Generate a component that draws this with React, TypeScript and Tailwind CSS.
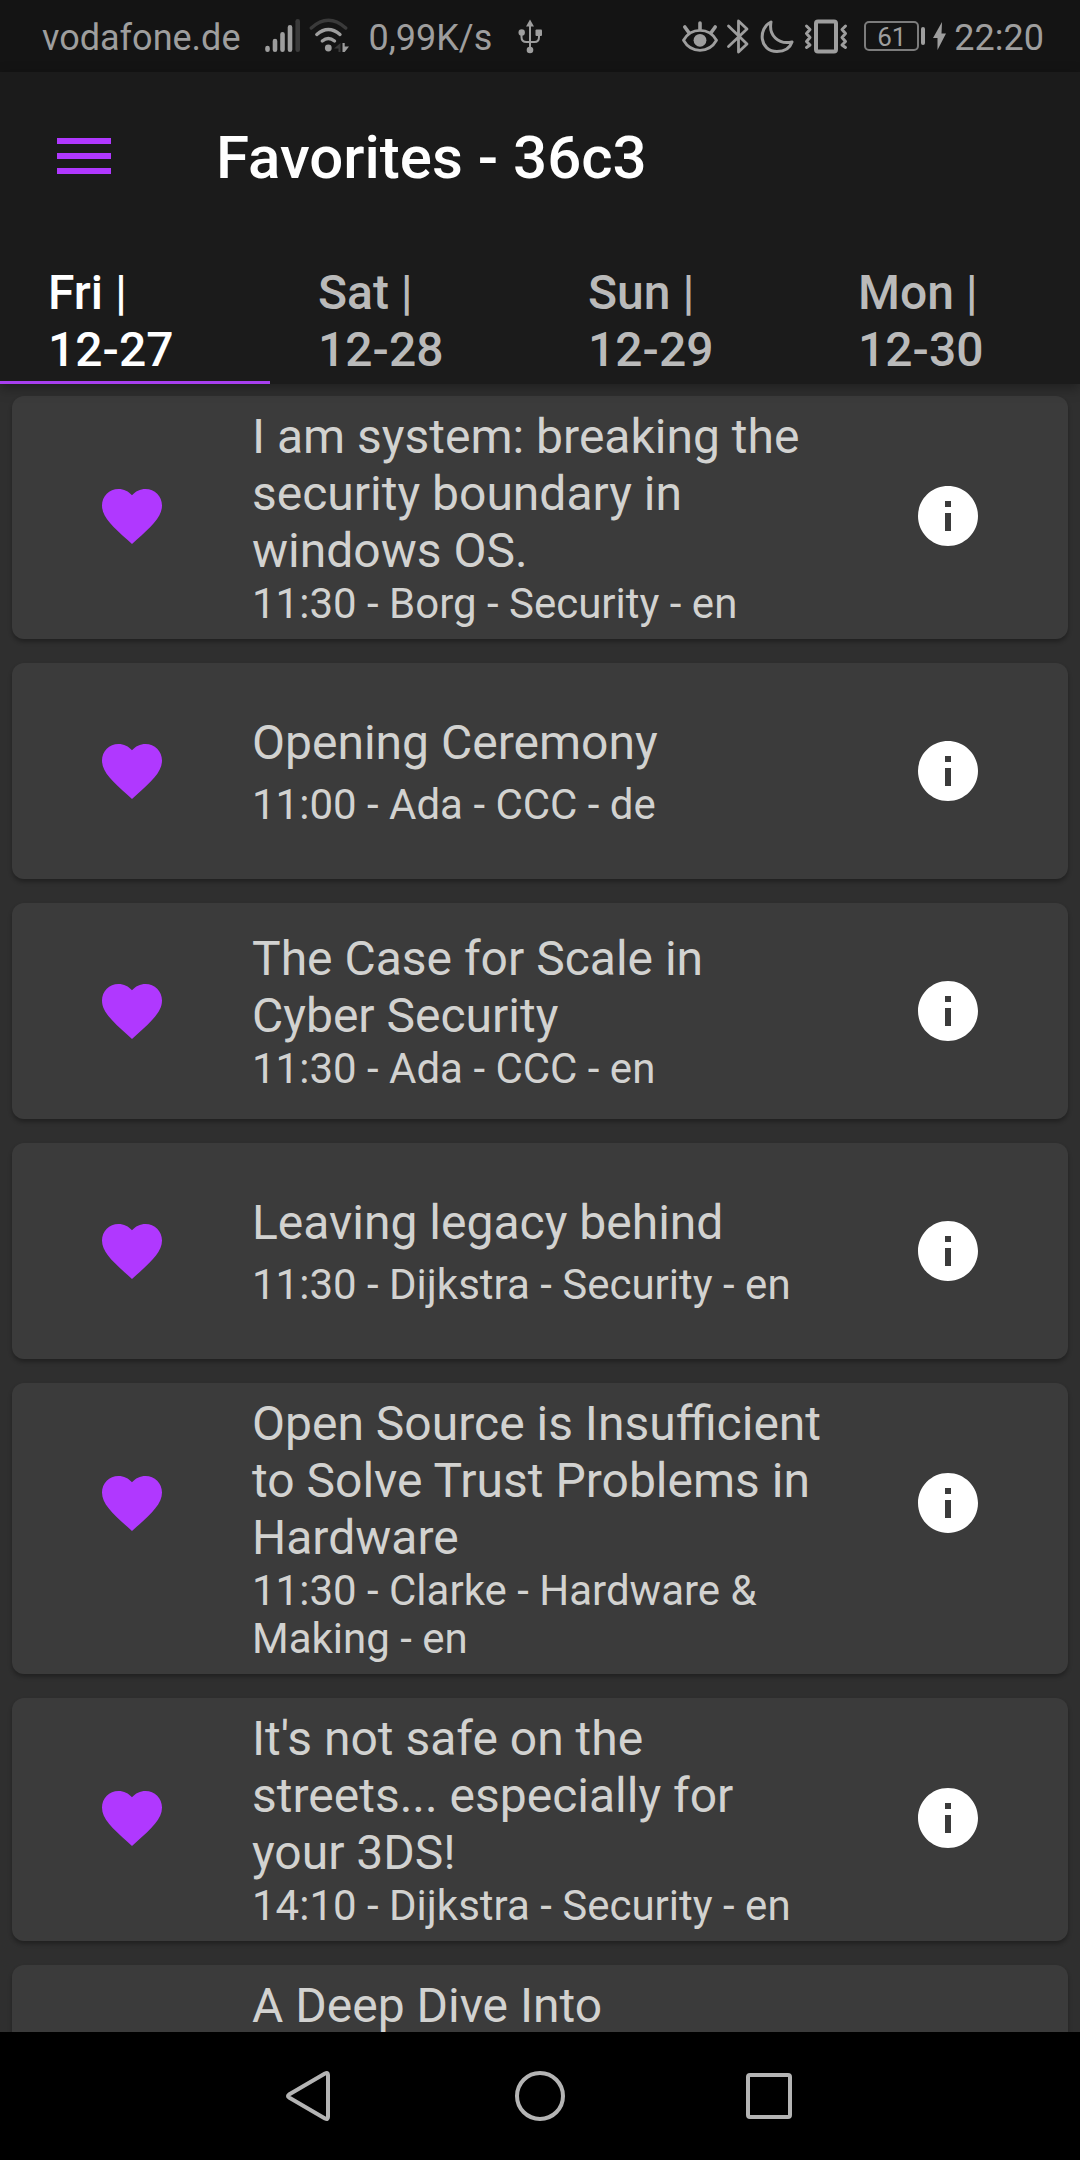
import { MdFavorite, MdInfo, MdMenu } from "react-icons/md";

type Talk = { title: string; details?: string; size: "compact" | "regular" | "tall" };

const days = [
  { day: "Fri |", date: "12-27" },
  { day: "Sat |", date: "12-28" },
  { day: "Sun |", date: "12-29" },
  { day: "Mon |", date: "12-30" },
];

const talks: Talk[] = [
  { title: "I am system: breaking the security boundary in windows OS.", details: "11:30 - Borg - Security - en", size: "tall" },
  { title: "Opening Ceremony", details: "11:00 - Ada - CCC - de", size: "compact" },
  { title: "The Case for Scale in Cyber Security", details: "11:30 - Ada - CCC - en", size: "regular" },
  { title: "Leaving legacy behind", details: "11:30 - Dijkstra - Security - en", size: "compact" },
  { title: "Open Source is Insufficient to Solve Trust Problems in Hardware", details: "11:30 - Clarke - Hardware & Making - en", size: "tall" },
  { title: "It's not safe on the streets... especially for your 3DS!", details: "14:10 - Dijkstra - Security - en", size: "tall" },
  { title: "A Deep Dive Into", size: "tall" },
];

function SignalIcon() {
  return (
    <svg className="h-9 w-9 shrink-0" viewBox="0 0 36 36" fill="none" strokeWidth="4.6" strokeLinecap="round" aria-hidden="true">
      <path d="M2.5 30v1.7M10 23v8.7M17.5 16.300v15.400M25 9.300v22.400" stroke="#9e9e9e" />
      <path d="M32.700 3.300v28.400" stroke="#3a3a3a" />
    </svg>
  );
}

function WifiIcon() {
  return (
    <svg className="h-9 w-10 shrink-0" viewBox="0 0 40 36" fill="none" strokeWidth="3.400" strokeLinecap="round" aria-hidden="true">
      <path d="M2.300 10Q19.300-5.500 36.700 10" stroke="#3a3a3a" />
      <path d="M7.800 16.500Q19.300 6.500 31 16.500M13.300 23Q19.300 18 25.500 23" stroke="#9e9e9e" />
      <circle cx="19.300" cy="30" r="3.400" fill="#9e9e9e" />
      <path d="M31.500 25v9h-2v-3.500H25z" fill="#3a3a3a" />
      <path d="M33.500 25h2.200v3.500h4.300l-4.300 5.500h-2.200z" fill="#9e9e9e" />
    </svg>
  );
}

function UsbIcon() {
  return (
    <svg className="h-9 w-6 shrink-0" viewBox="0 0 24 36" fill="none" stroke="#9e9e9e" strokeWidth="2" aria-hidden="true">
      <path d="M12 6v26M3.500 14v5q0 5 5 5h8q4.500 0 4.500-5v-5" />
      <path d="M12 1.500l4 7H8z" fill="#9e9e9e" stroke="none" />
      <circle cx="3.700" cy="14.500" r="3.200" fill="#9e9e9e" stroke="none" />
      <rect x="17.500" y="11.500" width="6.500" height="6.500" rx="1" fill="#9e9e9e" stroke="none" />
      <circle cx="12" cy="32" r="3.300" fill="#9e9e9e" stroke="none" />
    </svg>
  );
}

function EyeIcon() {
  return (
    <svg className="h-9 w-9 shrink-0" viewBox="0 0 36 36" fill="none" stroke="#9e9e9e" strokeWidth="2.800" strokeLinecap="round" aria-hidden="true">
      <path d="M1.500 22.300C9 9 27 9 34.500 22.300C27 35.600 9 35.600 1.500 22.300z" strokeLinejoin="round" />
      <path d="M18 5v6M2.800 9l4 5.500M33.200 9l-4 5.500" strokeWidth="3.600" />
      <circle cx="18" cy="22.300" r="6.400" fill="#9e9e9e" stroke="none" />
    </svg>
  );
}

function BluetoothIcon() {
  return (
    <svg className="h-9 w-6 shrink-0" viewBox="0 0 24 36" fill="none" stroke="#9e9e9e" strokeWidth="2.800" strokeLinecap="round" strokeLinejoin="round" aria-hidden="true">
      <path d="M2.500 8L21 26l-8.500 8V3L21 11 2.500 28.500" />
    </svg>
  );
}

function MoonIcon() {
  return (
    <svg className="h-9 w-9 shrink-0" viewBox="0 0 36 36" fill="none" stroke="#9e9e9e" strokeWidth="3" strokeLinejoin="round" aria-hidden="true">
      <path d="M11 4C-2.500 10.500-.5 33.500 17 33.500C24.500 33.500 30 30 32 24C18 27 8.500 17 11 4z" />
    </svg>
  );
}

function VibrateIcon() {
  return (
    <svg className="h-9 w-11 shrink-0" viewBox="0 0 44 36" fill="none" stroke="#9e9e9e" strokeWidth="3" strokeLinecap="round" strokeLinejoin="round" aria-hidden="true">
      <rect x="12" y="3.500" width="20" height="30" rx="2" strokeWidth="4" />
      <path d="M2.500 8l3.500 3.500-3.500 4 3.500 4-3.500 4 3.500 3.500-3.500 2.500M41.500 8l-3.500 3.500 3.500 4-3.500 4 3.500 4-3.500 3.500 3.500 2.500" />
    </svg>
  );
}

function StatusBar() {
  return (
    <div className="flex h-[72px] shrink-0 items-center justify-between bg-[#141414] pr-9 pl-[42px] text-[36px] leading-[48px] text-[#9e9e9e]">
      <div className="flex items-center">
        <span className="pt-1">vodafone.de</span>
        <span className="ml-6 flex items-center gap-2">
          <SignalIcon />
          <WifiIcon />
        </span>
        <span className="ml-5 pt-1">0,99K/s</span>
        <span className="ml-[26px] flex">
          <UsbIcon />
        </span>
      </div>
      <div className="flex items-center">
        <EyeIcon />
        <span className="ml-2 flex"><BluetoothIcon /></span>
        <span className="ml-[10px] flex"><MoonIcon /></span>
        <span className="ml-2 flex"><VibrateIcon /></span>
        <span className="ml-4 flex h-[30px] w-[55px] items-center justify-center rounded-[5px] border-2 border-[#7c7c7c] pt-0.5 text-[26px] leading-[28px]">61</span>
        <span className="ml-0.5 h-[18px] w-1 rounded-sm bg-[#9e9e9e]" />
        <svg className="ml-2 h-7 w-[13px] shrink-0" viewBox="0 0 13 28" fill="#9e9e9e" aria-hidden="true">
          <path d="M9 0L0 16h4.500v12L13 11.500H8.500z" />
        </svg>
        <span className="ml-2 pt-1">22:20</span>
      </div>
    </div>
  );
}

function TalkCard({ title, details, size }: Talk) {
  const button =
    size === "tall"
      ? "mt-12 flex h-36 w-36 shrink-0 items-center justify-center self-start"
      : "flex h-36 w-36 shrink-0 items-center justify-center";
  const text =
    size === "compact"
      ? "flex min-w-0 flex-1 flex-col gap-[9px] pt-3 pb-[11px]"
      : size === "tall"
        ? "flex min-w-0 flex-1 flex-col self-start pt-3 pb-[11px]"
        : "flex min-w-0 flex-1 flex-col pt-3 pb-[11px]";
  return (
    <li className="flex min-h-[216px] items-center gap-12 rounded-xl bg-[#3b3b3b] px-12 shadow-[0_3px_4px_rgba(0,0,0,0.3)]">
      <button type="button" aria-label={"Remove " + title + " from favorites"} className={button}>
        <MdFavorite className="h-[72px] w-[72px] text-[#b038ff]" />
      </button>
      <div className={text}>
        <h2 className="text-[48px] leading-[57px]">{title}</h2>
        {details && <p className="pt-px text-[42px] leading-[48px]">{details}</p>}
      </div>
      <button type="button" aria-label={"About " + title} className={button}>
        <MdInfo className="h-[72px] w-[72px] text-white" />
      </button>
    </li>
  );
}

export default function App() {
  return (
    <div className="flex h-screen flex-col overflow-hidden bg-[#2f2f2f] font-['Roboto',sans-serif] text-[#d2d2d0]">
      <StatusBar />
      <header className="relative z-10 shrink-0 bg-[#1b1b1b] shadow-[0_4px_12px_rgba(0,0,0,0.35)]">
        <div className="flex h-[168px] items-center gap-24 px-12">
          <button type="button" aria-label="Open menu">
            <MdMenu className="h-[72px] w-[72px] text-[#b038ff]" />
          </button>
          <h1 className="pt-1 text-[60px] leading-[72px] font-medium text-white">Favorites - 36c3</h1>
        </div>
        <div role="tablist" className="grid grid-cols-4">
          {days.map(({ day, date }, i) => (
            <button
              key={date}
              type="button"
              role="tab"
              aria-selected={i === 0}
              className={
                i === 0
                  ? "border-b-[3px] border-[#a83ff0] px-12 pt-6 pb-[3px] text-left text-[48px] leading-[57px] font-medium text-white"
                  : "border-b-[3px] border-transparent px-12 pt-6 pb-[3px] text-left text-[48px] leading-[57px] font-medium text-[#bababa]"
              }
            >
              {day} <span className="block">{date}</span>
            </button>
          ))}
        </div>
      </header>
      <main className="min-h-0 flex-1 overflow-hidden">
        <ul className="flex flex-col gap-6 p-3">
          {talks.map((talk) => (
            <TalkCard key={talk.title} {...talk} />
          ))}
        </ul>
      </main>
      <nav className="flex h-32 shrink-0 items-center justify-center bg-black">
        <button type="button" aria-label="Back" className="flex w-[229px] justify-center">
          <svg className="h-14 w-14" viewBox="0 0 56 56" fill="none" stroke="#b4b4b4" strokeWidth="4" strokeLinejoin="round" aria-hidden="true">
            <path d="M6 26.500L42 5.500Q45 4 45 7v42q0 3-3 1.500L6 29.500Q4 28 6 26.500z" />
          </svg>
        </button>
        <button type="button" aria-label="Home" className="flex w-[229px] justify-center">
          <svg className="h-14 w-14" viewBox="0 0 56 56" fill="none" stroke="#b4b4b4" strokeWidth="4" aria-hidden="true">
            <circle cx="28" cy="28" r="23" />
          </svg>
        </button>
        <button type="button" aria-label="Recent apps" className="flex w-[229px] justify-center">
          <svg className="h-14 w-14" viewBox="0 0 56 56" fill="none" stroke="#b4b4b4" strokeWidth="4" aria-hidden="true">
            <rect x="7" y="7" width="42" height="42" rx="2" />
          </svg>
        </button>
      </nav>
    </div>
  );
}
